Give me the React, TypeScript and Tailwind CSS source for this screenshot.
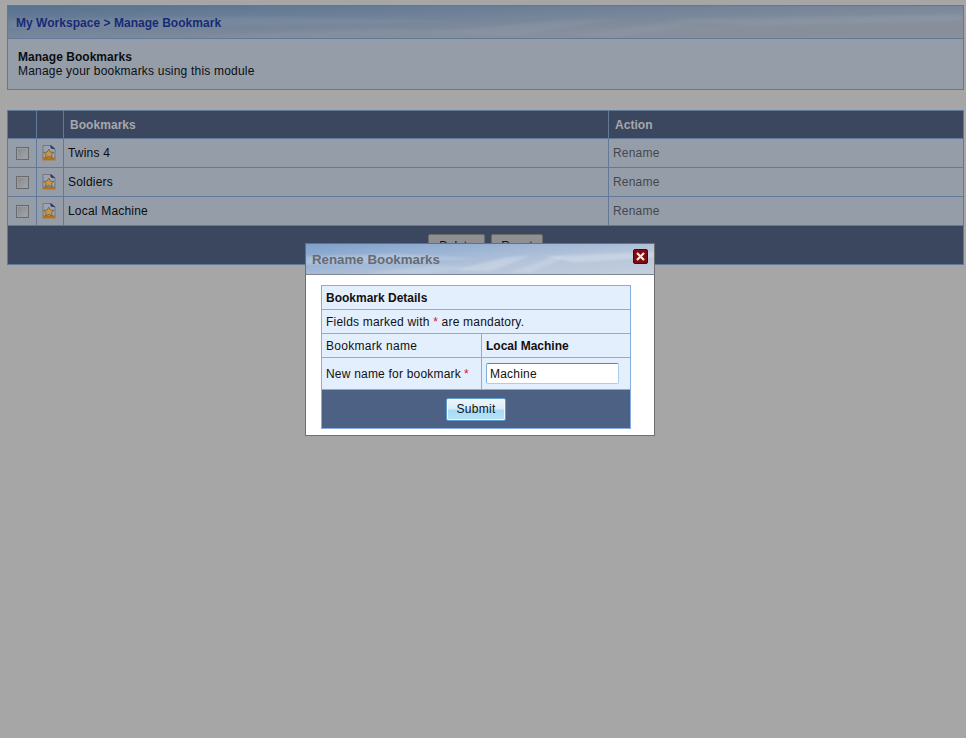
const rows = ["Twins 4", "Soldiers", "Local Machine"];

// soft cloud streaks used in the two gradient title bars
function SkyStreaks({ color, strength }: { color: string; strength: number }) {
  return (
    <svg className="absolute inset-0 h-full w-full" viewBox="0 0 350 31" preserveAspectRatio="none" style={{ opacity: strength }}>
      <defs>
        <filter id="soft">
          <feGaussianBlur stdDeviation="1.2" />
        </filter>
      </defs>
      <g fill={color} filter="url(#soft)">
        <path d="M0 13 L90 10 L170 15 L80 19 L0 21 Z" opacity="0.35" />
        <path d="M150 27 L200 14 L226 12 L186 28 Z" opacity="0.4" />
        <path d="M205 29 L250 13 L262 13 L226 30 Z" opacity="0.3" />
        <path d="M240 13 L350 8 L350 14 L270 19 Z" opacity="0.45" />
        <path d="M60 30 L130 22 L170 24 L120 31 Z" opacity="0.25" />
      </g>
    </svg>
  );
}

function BookmarkIcon() {
  return (
    <svg width="14" height="16" viewBox="0 0 14 16" className="block">
      <path d="M1 0.5 H8.5 L13 4 V13 H1 Z" fill="#9ca3b2" stroke="#666d80" strokeWidth="0.8" />
      <path d="M8 0.5 L9 3.8 L13.5 4.2 L9.5 0.5 Z" fill="#2f3a66" />
      <path d="M6.8 4.2 L8.4 7.1 L12 7.4 L9.4 9.6 L10.2 13 L6.8 11.3 L3.4 13 L4.2 9.6 L1.6 7.4 L5.2 7.1 Z" fill="#c09a55" stroke="#7d5a1e" strokeWidth="0.8" />
      <rect x="0.5" y="13" width="13" height="2.4" fill="#b5701a" />
    </svg>
  );
}

function Checkbox() {
  return (
    <div className="h-[13px] w-[13px] border border-[#6a6a6a] bg-[linear-gradient(135deg,#85898f,#a3a7ac)] shadow-[inset_0_0_0_1px_#9a9da2]" />
  );
}

function BookmarkRow({ name }: { name: string }) {
  return (
    <div className="flex h-[29px] border-b border-[#62799a] bg-[#959ea8] text-[12px] tracking-[0.2px]">
      <div className="flex w-[29px] items-center justify-center border-r border-[#62799a]">
        <Checkbox />
      </div>
      <div className="flex w-[27px] items-center border-r border-[#62799a] pl-[5px]">
        <BookmarkIcon />
      </div>
      <div className="flex w-[545px] items-center border-r border-[#62799a] pl-[4px] text-[#0b0b12]">{name}</div>
      <div className="flex flex-1 items-center pl-[4px] text-[#43474e]">Rename</div>
    </div>
  );
}

function RenameDialog() {
  return (
    <div className="absolute left-[305px] top-[243px] h-[193px] w-[350px] border border-[#6f6f6f] bg-white">
      <div className="relative flex h-[31px] items-center border-b border-[#7d8794] bg-[linear-gradient(174deg,#7ea0cb_0%,#9db5d4_35%,#b5c4da_62%,#c4cedd_100%)] pl-[6px] pt-[1px] text-[13.3px] font-bold text-[#666b74]">
        <SkyStreaks color="#e3eaf3" strength={0.8} />
        <span className="relative">Rename Bookmarks</span>
        <div className="absolute left-[327px] top-[5px] flex h-[15px] w-[15px] items-center justify-center rounded-[2px] border border-[#4a0508] bg-[#7e0b10]">
          <svg width="11" height="11" viewBox="0 0 11 11">
            <path d="M2 2 L9 9 M9 2 L2 9" stroke="#f4eaea" strokeWidth="2.2" />
          </svg>
        </div>
      </div>
      <div className="ml-[15px] mt-[10px] w-[310px] border border-[#86ace0] bg-[#e4effd] text-[12px] tracking-[0.2px] text-[#111]">
        <div className="flex h-[24px] items-center border-b border-[#86ace0] pl-[4px] font-bold tracking-normal">Bookmark Details</div>
        <div className="flex h-[24px] items-center border-b border-[#86ace0] pl-[4px]">
          Fields marked with&nbsp;<span className="text-[#e0102a]">*</span>&nbsp;are mandatory.
        </div>
        <div className="flex h-[24px] border-b border-[#86ace0]">
          <div className="flex w-[160px] items-center border-r border-[#86ace0] pl-[4px] tracking-[0.3px]">Bookmark name</div>
          <div className="flex flex-1 items-center pl-[4px] font-bold tracking-normal">Local Machine</div>
        </div>
        <div className="flex h-[32px] border-b border-[#86ace0]">
          <div className="flex w-[160px] items-center border-r border-[#86ace0] pl-[4px]">
            New name for bookmark <span className="ml-[3px] text-[#e0102a]">*</span>
          </div>
          <div className="flex flex-1 items-center pl-[4px]">
            <input
              readOnly
              value="Machine"
              className="h-[21px] w-[133px] rounded-[2px] border border-[#a9cdea] border-t-[#4f8ac0] border-l-[#7fb0d8] bg-white pl-[3px] pt-[1px] text-[12px] tracking-[0.2px] text-[#111] outline-none"
            />
          </div>
        </div>
        <div className="flex h-[38px] items-center justify-center bg-[#4c6183]">
          <button className="h-[23px] w-[60px] rounded-[2px] border border-[#5f9ccb] bg-[linear-gradient(#ecf5fb_0%,#d9edf9_45%,#a6dcf6_55%,#b8e3f8_100%)] text-[12px] tracking-[0.3px] text-[#111] shadow-[inset_0_0_0_1px_#eef7fd]">
            Submit
          </button>
        </div>
      </div>
    </div>
  );
}

export default function App() {
  return (
    <div className="relative h-[738px] w-[966px] overflow-hidden bg-[#a6a6a6] px-[7px] pt-[5px] font-['Liberation_Sans',Arial,sans-serif]">
      <div className="w-[957px] border border-[#66788f] bg-[#959ea8]">
        <div className="relative flex h-[33px] items-center border-b border-[#62799a] bg-[linear-gradient(178deg,#587290_0%,#6f8199_35%,#868f9c_70%,#8a8f9b_100%)] pl-[8px] pt-[1px] text-[12px] font-bold tracking-[0.03px] text-[#172a75]">
          <SkyStreaks color="#a5adb8" strength={0.4} />
          <span className="relative">My Workspace &gt; Manage Bookmark</span>
        </div>
        <div className="h-[50px] pl-[10px] pt-[11px] text-[12px] leading-[14px] text-[#0d0d14]">
          <div className="font-bold tracking-[0.03px]">Manage Bookmarks</div>
          <div className="tracking-[0.2px]">Manage your bookmarks using this module</div>
        </div>
      </div>

      <div className="mt-[20px] w-[957px] border border-[#62799a]">
        <div className="flex h-[28px] border-b border-[#62799a] bg-[#3a475f] text-[12px] font-bold tracking-[0.05px] text-[#a6a8ad]">
          <div className="w-[29px] border-r border-[#62799a]" />
          <div className="w-[27px] border-r border-[#62799a]" />
          <div className="flex w-[545px] items-center border-r border-[#62799a] pl-[6px]">Bookmarks</div>
          <div className="flex flex-1 items-center pl-[6px]">Action</div>
        </div>
        {rows.map((name) => (
          <BookmarkRow key={name} name={name} />
        ))}
        <div className="flex h-[38px] justify-center gap-[6px] bg-[#3a475f] pt-[8px]">
          <button className="h-[24px] w-[57px] rounded-[2px] border border-[#6c6c6c] bg-[#8d8f92] text-[12px] text-[#111]">Delete</button>
          <button className="h-[24px] w-[52px] rounded-[2px] border border-[#6c6c6c] bg-[#8d8f92] text-[12px] text-[#111]">Reset</button>
        </div>
      </div>

      <RenameDialog />
    </div>
  );
}
